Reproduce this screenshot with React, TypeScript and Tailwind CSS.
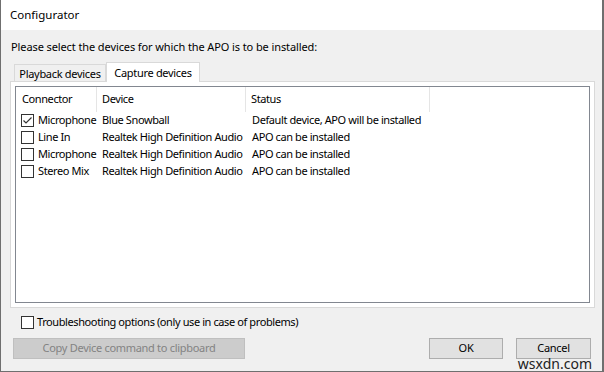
import React from "react";

const rows = [
  { connector: "Microphone", device: "Blue Snowball", status: "Default device, APO will be installed", checked: true },
  { connector: "Line In", device: "Realtek High Definition Audio", status: "APO can be installed", checked: false },
  { connector: "Microphone", device: "Realtek High Definition Audio", status: "APO can be installed", checked: false },
  { connector: "Stereo Mix", device: "Realtek High Definition Audio", status: "APO can be installed", checked: false },
];

function CheckBox({ checked }: { checked?: boolean }) {
  return (
    <span className="w-[13px] h-[13px] border border-[#333333] bg-white flex items-center justify-center shrink-0">
      {checked && (
        <svg width="11" height="11" viewBox="0 0 11 11">
          <path d="M1.5 5.5 L4 8 L9.5 2.5" fill="none" stroke="#333333" strokeWidth="1.2" />
        </svg>
      )}
    </span>
  );
}

export default function App() {
  return (
    <div
      className="relative w-[604px] h-[372px] flex flex-col border-l border-r-2 border-b border-[#6f6f6f] text-[11px] tracking-[-0.3px] text-black overflow-hidden"
      style={{ fontFamily: '"Noto Sans", "Liberation Sans", sans-serif' }}
    >
      <div className="h-[30px] bg-white flex items-center px-[9px] shrink-0 text-[11.5px] tracking-normal">Configurator</div>

      <div className="flex-1 bg-[#f0f0f0] px-[9px] pt-[9px] flex flex-col">
        <p className="leading-[16px] pl-[1px] tracking-[-0.1px]">Please select the devices for which the APO is to be installed:</p>

        <div className="flex items-end pl-[4px] mt-[7px] h-[19px]">
          <div className="h-[17px] w-[92px] border border-b-0 border-[#d9d9d9] bg-[#f0f0f0] flex items-center justify-center leading-none">
            Playback devices
          </div>
          <div className="h-[20px] w-[94px] border border-b-0 border-[#d9d9d9] bg-white flex items-center justify-center leading-none -mb-[1px] relative z-10">
            Capture devices
          </div>
        </div>

        <div className="border border-[#d9d9d9] bg-white h-[227px] p-[4px] w-[585px]">
          <div className="border border-[#828790] h-full w-full tracking-[-0.4px]">
            <div className="flex h-[25px] items-center">
              <div className="w-[81px] pl-[6px] h-full flex items-center border-r border-[#e5e5e5]">Connector</div>
              <div className="w-[149px] pl-[5px] h-full flex items-center border-r border-[#e5e5e5]">Device</div>
              <div className="w-[184px] pl-[5px] h-full flex items-center border-r border-[#e5e5e5]">Status</div>
            </div>
            {rows.map((r, i) => (
              <div key={i} className="flex h-[17px] items-center">
                <div className="w-[81px] pl-[5px] flex items-center gap-[4px] whitespace-nowrap">
                  <CheckBox checked={r.checked} />
                  {r.connector}
                </div>
                <div className="w-[150px] pl-[5px] whitespace-nowrap">{r.device}</div>
                <div className="pl-[5px] whitespace-nowrap">{r.status}</div>
              </div>
            ))}
          </div>
        </div>

        <div className="flex items-center gap-[3px] mt-[7px] pl-[11px] h-[14px] tracking-[-0.4px]">
          <CheckBox />
          <span>Troubleshooting options (only use in case of problems)</span>
        </div>

        <div className="flex items-center mt-[9px]">
          <div className="ml-[3px] w-[232px] h-[21px] bg-[#cccccc] border border-[#bfbfbf] text-[#838383] flex items-center justify-center">
            Copy Device command to clipboard
          </div>
          <div className="ml-auto w-[74px] h-[21px] bg-[#e1e1e1] border border-[#adadad] flex items-center justify-center">OK</div>
          <div className="ml-[13px] mr-[2px] w-[75px] h-[21px] bg-[#e1e1e1] border border-[#adadad] flex items-center justify-center">
            Cancel
          </div>
        </div>
      </div>

      <span className="absolute right-[10px] bottom-[0px] text-[14px] tracking-normal text-[#222] leading-[14px]">wsxdn.com</span>
    </div>
  );
}
